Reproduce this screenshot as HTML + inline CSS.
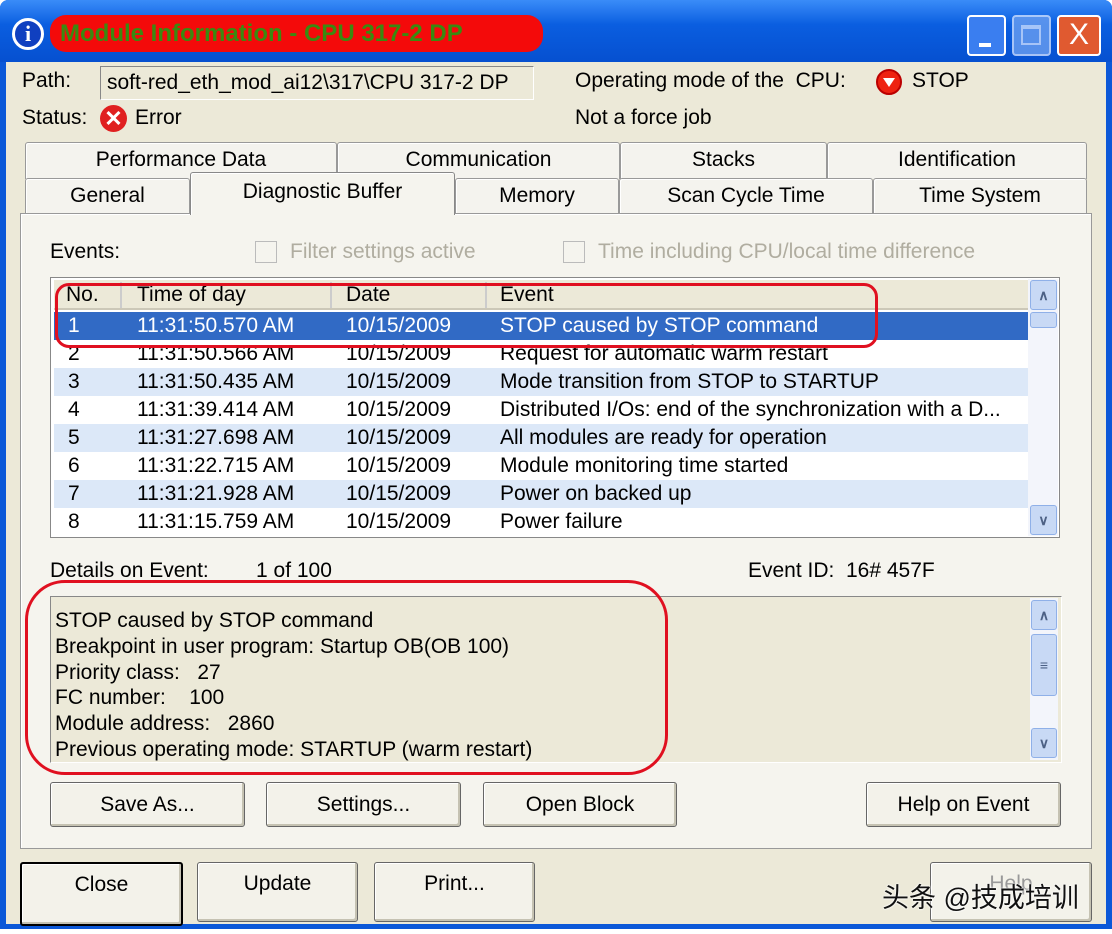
<!DOCTYPE html><html><head><style>
*{margin:0;padding:0;box-sizing:border-box}
body{width:1112px;height:934px;background:#fff;font-family:"Liberation Sans",sans-serif;font-size:21px;color:#000;position:relative;overflow:hidden}
.a{position:absolute;white-space:nowrap}
.tab{position:absolute;background:#f4f3ee;border:1px solid #999;border-bottom:none;border-radius:3px 3px 0 0;text-align:center;line-height:34px;box-shadow:inset 1px 1px #fff}
.btn{position:absolute;background:#f3f2ea;border:1px solid #666;border-radius:3px;text-align:center;box-shadow:inset -2px -2px #c5c2b2,inset 1px 1px #fff;font-size:21px}
.row{position:absolute;left:54px;width:974px;height:28px;line-height:28px}
.row span{position:absolute}
.sb{position:absolute;background:#c8d9f5;border:1px solid #8fb0e8;border-radius:3px;color:#4d6185;text-align:center;font-size:14px;font-weight:bold}
</style></head><body>
<div class="a" style="left:0;top:0;width:1112px;height:930px;background:#0b58d8;border-radius:8px 8px 0 0"></div>
<div class="a" style="left:0;top:0;width:1112px;height:62px;background:linear-gradient(#3a8cf8,#0a5ee0 40%,#0650d0);border-radius:8px 8px 0 0"></div>
<div class="a" style="left:12px;top:18px;width:32px;height:32px;border-radius:50%;background:#1040c0;border:3px solid #fff;color:#fff;font:bold 22px 'Liberation Serif',serif;text-align:center;line-height:26px">i</div>
<div class="a" style="left:50px;top:15px;width:493px;height:37px;background:#f40a0a;border-radius:16px;color:#3a8a10;font-size:24px;font-weight:bold;line-height:37px;padding-left:10px">Module Information - CPU 317-2 DP</div>
<div class="a" style="left:967px;top:15px;width:39px;height:41px;background:#3a7ef0;border:2px solid #fff;border-radius:4px"><div class="a" style="left:10px;top:26px;width:12px;height:4px;background:#fff"></div></div>
<div class="a" style="left:1012px;top:15px;width:39px;height:41px;background:#6a9ef0;border:2px solid #cfe0ff;border-radius:4px;opacity:.8"><div class="a" style="left:7px;top:8px;width:20px;height:20px;border:2px solid #cfe0ff;border-top-width:4px"></div></div>
<div class="a" style="left:1057px;top:15px;width:44px;height:41px;background:#e05a30;border:2px solid #fff;border-radius:4px;color:#fff;font-size:30px;text-align:center;line-height:36px">X</div>
<div class="a" style="left:6px;top:62px;width:1100px;height:862px;background:#ece9d8"></div>
<div class="a" style="left:22px;top:69px">Path:</div>
<div class="a" style="left:100px;top:66px;width:434px;height:34px;border:1px solid #888;border-right-color:#fff;border-bottom-color:#fff;line-height:32px;padding-left:6px">soft-red_eth_mod_ai12\317\CPU 317-2 DP</div>
<div class="a" style="left:575px;top:69px">Operating mode of the&nbsp; CPU:</div>
<div class="a" style="left:876px;top:69px;width:26px;height:26px;border-radius:50%;background:#e21;border:2px solid #b00"><div class="a" style="left:5px;top:7px;border-left:6px solid transparent;border-right:6px solid transparent;border-top:9px solid #fff"></div></div>
<div class="a" style="left:912px;top:69px">STOP</div>
<div class="a" style="left:22px;top:106px">Status:</div>
<div class="a" style="left:100px;top:105px;width:27px;height:27px;border-radius:50%;background:#e02020;color:#fff;text-align:center;font-weight:bold;font-size:22px;line-height:27px">✕</div>
<div class="a" style="left:135px;top:106px">Error</div>
<div class="a" style="left:575px;top:106px">Not a force job</div>
<div class="tab" style="left:25px;top:142px;width:312px;height:37px">Performance Data</div>
<div class="tab" style="left:337px;top:142px;width:283px;height:37px">Communication</div>
<div class="tab" style="left:620px;top:142px;width:207px;height:37px">Stacks</div>
<div class="tab" style="left:827px;top:142px;width:260px;height:37px">Identification</div>
<div class="a" style="left:20px;top:213px;width:1072px;height:636px;background:#f5f4ee;border:1px solid #999;box-shadow:inset 1px 1px #fff"></div>
<div class="tab" style="left:25px;top:178px;width:165px;height:35px">General</div>
<div class="tab" style="left:455px;top:178px;width:164px;height:35px">Memory</div>
<div class="tab" style="left:619px;top:178px;width:254px;height:35px">Scan Cycle Time</div>
<div class="tab" style="left:873px;top:178px;width:214px;height:35px">Time System</div>
<div class="tab" style="left:190px;top:172px;width:265px;height:43px;background:#f5f4ee;line-height:38px;border-color:#888">Diagnostic Buffer</div>
<div class="a" style="left:50px;top:240px">Events:</div>
<div class="a" style="left:255px;top:241px;width:22px;height:22px;border:1px solid #bbb;background:#f5f4ee"></div>
<div class="a" style="left:290px;top:240px;color:#b0ada0">Filter settings active</div>
<div class="a" style="left:563px;top:241px;width:22px;height:22px;border:1px solid #bbb;background:#f5f4ee"></div>
<div class="a" style="left:598px;top:240px;color:#b0ada0">Time including CPU/local time difference</div>
<div class="a" style="left:50px;top:277px;width:1010px;height:261px;background:#fff;border:1px solid #888"></div>
<div class="a" style="left:54px;top:280px;width:974px;height:30px;background:#ece9d8;border-bottom:2px solid #ccc8b8"></div>
<div class="a" style="left:120px;top:282px;width:2px;height:26px;background:#ccc"></div>
<div class="a" style="left:330px;top:282px;width:2px;height:26px;background:#ccc"></div>
<div class="a" style="left:485px;top:282px;width:2px;height:26px;background:#ccc"></div>
<div class="a" style="left:66px;top:283px">No.</div><div class="a" style="left:137px;top:283px">Time of day</div><div class="a" style="left:346px;top:283px">Date</div><div class="a" style="left:500px;top:283px">Event</div>
<div class="row" style="top:312px;background:#316ac5;color:#fff"><span style="left:14px">1</span><span style="left:83px">11:31:50.570 AM</span><span style="left:292px">10/15/2009</span><span style="left:446px">STOP caused by STOP command</span></div>
<div class="row" style="top:340px"><span style="left:14px">2</span><span style="left:83px">11:31:50.566 AM</span><span style="left:292px">10/15/2009</span><span style="left:446px">Request for automatic warm restart</span></div>
<div class="row" style="top:368px;background:#dce8f8"><span style="left:14px">3</span><span style="left:83px">11:31:50.435 AM</span><span style="left:292px">10/15/2009</span><span style="left:446px">Mode transition from STOP to STARTUP</span></div>
<div class="row" style="top:396px"><span style="left:14px">4</span><span style="left:83px">11:31:39.414 AM</span><span style="left:292px">10/15/2009</span><span style="left:446px">Distributed I/Os: end of the synchronization with a D...</span></div>
<div class="row" style="top:424px;background:#dce8f8"><span style="left:14px">5</span><span style="left:83px">11:31:27.698 AM</span><span style="left:292px">10/15/2009</span><span style="left:446px">All modules are ready for operation</span></div>
<div class="row" style="top:452px"><span style="left:14px">6</span><span style="left:83px">11:31:22.715 AM</span><span style="left:292px">10/15/2009</span><span style="left:446px">Module monitoring time started</span></div>
<div class="row" style="top:480px;background:#dce8f8"><span style="left:14px">7</span><span style="left:83px">11:31:21.928 AM</span><span style="left:292px">10/15/2009</span><span style="left:446px">Power on backed up</span></div>
<div class="row" style="top:508px"><span style="left:14px">8</span><span style="left:83px">11:31:15.759 AM</span><span style="left:292px">10/15/2009</span><span style="left:446px">Power failure</span></div>
<div class="a" style="left:1028px;top:279px;width:30px;height:257px;background:#f3f5fb"></div>
<div class="sb" style="left:1030px;top:280px;width:27px;height:30px;line-height:28px">∧</div>
<div class="sb" style="left:1030px;top:312px;width:27px;height:16px"></div>
<div class="sb" style="left:1030px;top:505px;width:27px;height:30px;line-height:28px">∨</div>
<div class="a" style="left:55px;top:283px;width:823px;height:65px;border:3px solid #e01020;border-radius:14px"></div>
<div class="a" style="left:50px;top:559px">Details on Event:</div>
<div class="a" style="left:256px;top:559px">1 of 100</div>
<div class="a" style="left:748px;top:559px">Event ID:</div>
<div class="a" style="left:846px;top:559px">16# 457F</div>
<div class="a" style="left:50px;top:596px;width:1012px;height:167px;background:#ece9d8;border:1px solid #888;border-right-color:#fff;border-bottom-color:#fff;line-height:25.8px;padding:11px 0 0 4px">STOP caused by STOP command<br>Breakpoint in user program: Startup OB(OB 100)<br>Priority class:&nbsp;&nbsp; 27<br>FC number:&nbsp;&nbsp;&nbsp; 100<br>Module address:&nbsp;&nbsp; 2860<br>Previous operating mode: STARTUP (warm restart)</div>
<div class="a" style="left:1030px;top:598px;width:28px;height:162px;background:#f3f5fb"></div>
<div class="sb" style="left:1031px;top:600px;width:26px;height:30px;line-height:28px">∧</div>
<div class="sb" style="left:1031px;top:634px;width:26px;height:62px;line-height:60px">≡</div>
<div class="sb" style="left:1031px;top:728px;width:26px;height:30px;line-height:28px">∨</div>
<div class="a" style="left:25px;top:580px;width:643px;height:195px;border:3px solid #e01020;border-radius:40px"></div>
<div class="btn" style="left:50px;top:782px;width:195px;height:45px;line-height:43px">Save As...</div>
<div class="btn" style="left:266px;top:782px;width:195px;height:45px;line-height:43px">Settings...</div>
<div class="btn" style="left:483px;top:782px;width:194px;height:45px;line-height:43px">Open Block</div>
<div class="btn" style="left:866px;top:782px;width:195px;height:45px;line-height:43px">Help on Event</div>
<div class="btn" style="left:20px;top:862px;width:163px;height:64px;line-height:42px;border:2px solid #000">Close</div>
<div class="btn" style="left:197px;top:862px;width:161px;height:60px;line-height:42px">Update</div>
<div class="btn" style="left:374px;top:862px;width:161px;height:60px;line-height:42px">Print...</div>
<div class="btn" style="left:930px;top:862px;width:162px;height:60px;line-height:42px;color:#999">Help</div>
<div class="a" style="left:882px;top:876px;font-family:'Liberation Sans','Noto Sans CJK SC',sans-serif;font-size:27px;color:#111;text-shadow:0 0 2px #fff,0 0 2px #fff">头条 @技成培训</div>
<div class="a" style="left:0;top:929px;width:1112px;height:5px;background:#fff"></div>
</body></html>
